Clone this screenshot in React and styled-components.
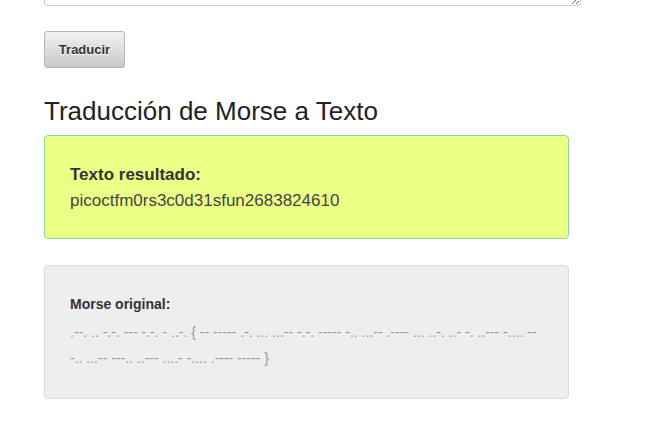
import React from "react";
import styled, { createGlobalStyle } from "styled-components";

const morse =
  ".--. .. -.-. --- -.-. - ..-. { -- ----- .-. ... ...-- -.-. ----- -.. ...-- .---- ... ..-. ..- -. ..--- -.... ---.. ...-- ---.. ..--- ....- -.... .---- ----- }";

const GlobalStyle = createGlobalStyle`
  body {
    margin: 0;
    background: #fff;
    font-family: "Liberation Sans", Arial, sans-serif;
    color: #333;
  }
`;

const Page = styled.div`
  padding-left: 44px;
  overflow: hidden;
`;

const Input = styled.textarea`
  display: block;
  box-sizing: border-box;
  width: 537px;
  height: 80px;
  margin: -74px 0 0;
  border: 1px solid #ccc;
  border-radius: 3px;
  font-family: inherit;
`;

const Button = styled.button`
  display: block;
  margin-top: 25px;
  width: 81px;
  height: 37px;
  border: 1px solid #b4b4b4;
  border-radius: 3px;
  background: linear-gradient(#f3f3f3, #c9c9c9);
  font-family: "Liberation Sans", Arial, sans-serif;
  font-weight: bold;
  font-size: 13px;
  color: #333;
  text-shadow: 0 1px 0 #fff;
  cursor: pointer;
`;

const Title = styled.h3`
  margin: 30px 0 11px;
  font-size: 26px;
  font-weight: normal;
  line-height: 26px;
  color: #222;
`;

const Panel = styled.div`
  box-sizing: border-box;
  width: 525px;
  border: 1px solid ${(p) => (p.$tone === "ok" ? "#8fd88f" : "#dcdcdc")};
  border-radius: 4px;
  background: ${(p) => (p.$tone === "ok" ? "#ebff87" : "#eeeeee")};
  padding: ${(p) => (p.$tone === "ok" ? "26px 25px 24px" : "28px 25px 27px")};
  margin-bottom: 26px;
`;

const Label = styled.div`
  font-weight: bold;
  font-size: ${(p) => (p.$small ? "14px" : "17px")};
  line-height: ${(p) => (p.$small ? "20px" : "26px")};
  margin-bottom: ${(p) => (p.$small ? "5px" : "0")};
  color: #333;
`;

const Result = styled.div`
  font-size: 17px;
  line-height: 26px;
  color: #444;
`;

const Code = styled.div`
  font-size: 14px;
  line-height: 26px;
  color: #9a9a9a;
`;

export default function App() {
  return (
    <Page>
      <GlobalStyle />
      <Input />
      <Button>Traducir</Button>
      <Title>Traducción de Morse a Texto</Title>
      <Panel $tone="ok">
        <Label>Texto resultado:</Label>
        <Result>picoctfm0rs3c0d31sfun2683824610</Result>
      </Panel>
      <Panel>
        <Label $small>Morse original:</Label>
        <Code>{morse}</Code>
      </Panel>
    </Page>
  );
}
